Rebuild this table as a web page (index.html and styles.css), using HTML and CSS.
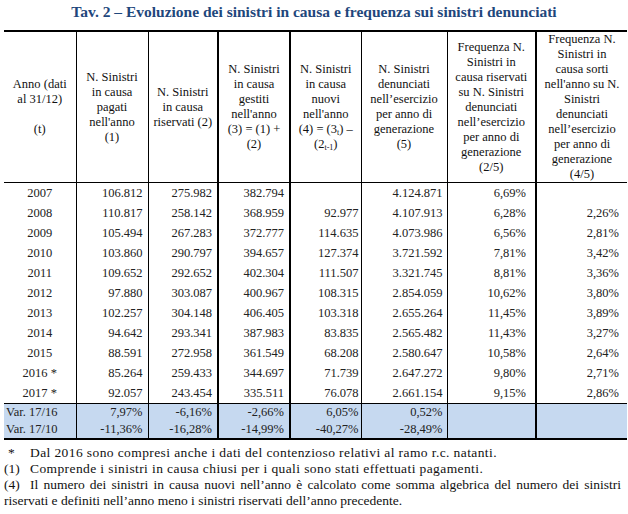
FILE: index.html
```html
<!DOCTYPE html>
<html lang="it">
<head>
<meta charset="utf-8">
<title>Tav. 2</title>
<link rel="stylesheet" href="styles.css">
</head>
<body>
<h1 class="title">Tav. 2 – Evoluzione dei sinistri in causa e frequenza sui sinistri denunciati</h1>
<table class="tav">
  <colgroup>
    <col class="c1"><col class="c2"><col class="c3"><col class="c4"><col class="c5"><col class="c6"><col class="c7"><col class="c8">
  </colgroup>
  <thead>
    <tr>
      <th>Anno (dati<br>al 31/12)<br><br>(t)</th>
      <th>N. Sinistri<br>in causa<br>pagati<br>nell'anno<br>(1)</th>
      <th>N. Sinistri<br>in causa<br>riservati (2)</th>
      <th class="thick">N. Sinistri<br>in causa<br>gestiti<br>nell'anno<br>(3) = (1) +<br>(2)</th>
      <th class="thick">N. Sinistri<br>in causa<br>nuovi<br>nell'anno<br>(4) = (3<sub>t</sub>) –<br>(2<sub>t-1</sub>)</th>
      <th>N. Sinistri<br>denunciati<br>nell’esercizio<br>per anno di<br>generazione<br>(5)</th>
      <th>Frequenza N.<br>Sinistri in<br>causa riservati<br>su N. Sinistri<br>denunciati<br>nell’esercizio<br>per anno di<br>generazione<br>(2/5)</th>
      <th class="thick">Frequenza N.<br>Sinistri in<br>causa sorti<br>nell'anno su N.<br>Sinistri<br>denunciati<br>nell’esercizio<br>per anno di<br>generazione<br>(4/5)</th>
    </tr>
  </thead>
  <tbody class="data">
    <tr><td>2007</td><td>106.812</td><td>275.982</td><td class="thick">382.794</td><td class="thick"></td><td>4.124.871</td><td>6,69%</td><td class="thick"></td></tr>
    <tr><td>2008</td><td>110.817</td><td>258.142</td><td class="thick">368.959</td><td class="thick">92.977</td><td>4.107.913</td><td>6,28%</td><td class="thick">2,26%</td></tr>
    <tr><td>2009</td><td>105.494</td><td>267.283</td><td class="thick">372.777</td><td class="thick">114.635</td><td>4.073.986</td><td>6,56%</td><td class="thick">2,81%</td></tr>
    <tr><td>2010</td><td>103.860</td><td>290.797</td><td class="thick">394.657</td><td class="thick">127.374</td><td>3.721.592</td><td>7,81%</td><td class="thick">3,42%</td></tr>
    <tr><td>2011</td><td>109.652</td><td>292.652</td><td class="thick">402.304</td><td class="thick">111.507</td><td>3.321.745</td><td>8,81%</td><td class="thick">3,36%</td></tr>
    <tr><td>2012</td><td>97.880</td><td>303.087</td><td class="thick">400.967</td><td class="thick">108.315</td><td>2.854.059</td><td>10,62%</td><td class="thick">3,80%</td></tr>
    <tr><td>2013</td><td>102.257</td><td>304.148</td><td class="thick">406.405</td><td class="thick">103.318</td><td>2.655.264</td><td>11,45%</td><td class="thick">3,89%</td></tr>
    <tr><td>2014</td><td>94.642</td><td>293.341</td><td class="thick">387.983</td><td class="thick">83.835</td><td>2.565.482</td><td>11,43%</td><td class="thick">3,27%</td></tr>
    <tr><td>2015</td><td>88.591</td><td>272.958</td><td class="thick">361.549</td><td class="thick">68.208</td><td>2.580.647</td><td>10,58%</td><td class="thick">2,64%</td></tr>
    <tr><td>2016 *</td><td>85.264</td><td>259.433</td><td class="thick">344.697</td><td class="thick">71.739</td><td>2.647.272</td><td>9,80%</td><td class="thick">2,71%</td></tr>
    <tr><td>2017 *</td><td>92.057</td><td>243.454</td><td class="thick">335.511</td><td class="thick">76.078</td><td>2.661.154</td><td>9,15%</td><td class="thick">2,86%</td></tr>
  </tbody>
  <tbody class="var">
    <tr class="first"><td>Var. 17/16</td><td>7,97%</td><td>-6,16%</td><td class="thick">-2,66%</td><td class="thick">6,05%</td><td>0,52%</td><td></td><td class="thick"></td></tr>
    <tr><td>Var. 17/10</td><td>-11,36%</td><td>-16,28%</td><td class="thick">-14,99%</td><td class="thick">-40,27%</td><td>-28,49%</td><td></td><td class="thick"></td></tr>
  </tbody>
</table>
<div class="notes">
  <p class="note"><span class="mark star">*</span>Dal 2016 sono compresi anche i dati del contenzioso relativi al ramo r.c. natanti.</p>
  <p class="note"><span class="mark">(1)</span>Comprende i sinistri in causa chiusi per i quali sono stati effettuati pagamenti.</p>
  <p class="note tight"><span class="jline"><span class="mark">(4)</span>Il numero dei sinistri in causa nuovi nell’anno è calcolato come somma algebrica del numero dei sinistri</span> riservati e definiti nell’anno meno i sinistri riservati dell’anno precedente.</p>
</div>
</body>
</html>
```

FILE: styles.css
```css
html, body {
  margin: 0;
  padding: 0;
  background: #fff;
}

body {
  font-family: "Liberation Serif", "Times New Roman", serif;
  color: #111;
  width: 628px;
}

.title {
  margin: 0;
  height: 30px;
  line-height: 24px;
  font-size: 15.5px;
  font-weight: bold;
  color: #1f477c;
  text-align: center;
}

.tav {
  margin-left: 4px;
  width: 623px;
  border-collapse: collapse;
  table-layout: fixed;
  font-size: 12.5px;
}

.c1 { width: 72px; }
.c2 { width: 72px; }
.c3 { width: 70px; }
.c4 { width: 72px; }
.c5 { width: 71px; }
.c6 { width: 86px; }
.c7 { width: 89px; }
.c8 { width: 91px; }

.tav thead tr {
  border-top: 2px solid #000;
  border-bottom: 1px solid #000;
}

.tav th {
  font-weight: normal;
  height: 149px;
  padding: 0;
  line-height: 15px;
  text-align: center;
  vertical-align: middle;
  white-space: nowrap;
  border-left: 1px solid #000;
  color: #111;
}

.tav th sub {
  font-size: 8px;
  line-height: 0;
  vertical-align: -2px;
}

.tav td {
  padding: 0 5px 0 0;
  text-align: right;
  white-space: nowrap;
  border-left: 1px solid #000;
  color: #222;
}

.tav th:first-child,
.tav td:first-child {
  border-left: none;
}

.tav .thick {
  border-left: 2px solid #000;
}

.data td {
  height: 20px;
  line-height: 20px;
}

.data td:first-child {
  text-align: center;
  padding: 0;
}

.tav td:nth-child(5) { padding-right: 2px; }
.tav td:nth-child(6) { padding-right: 4px; }
.tav td:nth-child(7) { padding-right: 9px; }
.tav td:nth-child(8) { padding-right: 8px; }

.var {
  background: #c6d9f0;
  border-bottom: 2px solid #000;
}

.var tr.first {
  border-top: 1px solid #000;
}

.var td {
  height: 17px;
  line-height: 17px;
}

.var td:first-child {
  text-align: left;
  padding-left: 2px;
}

.notes {
  padding: 5px 7px 0 4px;
  font-size: 13.5px;
  letter-spacing: 0.4px;
  line-height: 16px;
  color: #111;
}

.note {
  margin: 0;
}

.note.tight {
  letter-spacing: 0;
}

.jline {
  display: block;
  white-space: nowrap;
  text-align: justify;
  text-align-last: justify;
}

.mark {
  display: inline-block;
  width: 26px;
  letter-spacing: 0;
  text-align: left;
}

.mark.star {
  padding-left: 4px;
  width: 22px;
}
```
